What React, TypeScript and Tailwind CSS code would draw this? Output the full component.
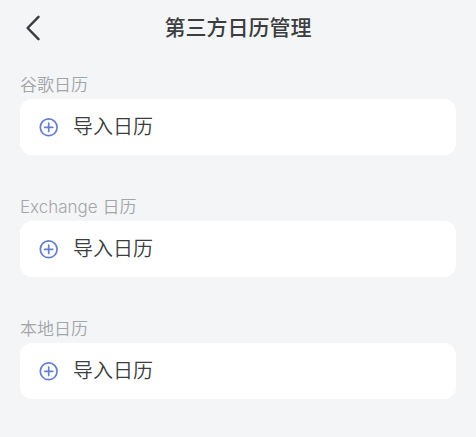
const sections = [
  { id: "google", title: "谷歌日历" },
  { id: "exchange", title: "Exchange 日历" },
  { id: "local", title: "本地日历" },
];

function BackIcon() {
  return (
    <svg width="16" height="26" viewBox="0 0 16 26" fill="none" aria-hidden="true">
      <path d="M13.5 1.8 2.6 13l10.9 11.2" stroke="#3b3d41" strokeWidth="2.5" strokeLinecap="round" strokeLinejoin="round" />
    </svg>
  );
}

function PlusCircleIcon() {
  return (
    <svg width="20" height="20" viewBox="0 0 20 20" fill="none" aria-hidden="true">
      <circle cx="9.7" cy="10.3" r="8.4" stroke="#6480cc" strokeWidth="1.7" />
      <path d="M9.7 6.2v8.2M5.6 10.3h8.2" stroke="#6480cc" strokeWidth="1.7" strokeLinecap="round" />
    </svg>
  );
}

export default function App() {
  return (
    <div className="min-h-screen bg-[#f4f5f7] font-['Inter','Noto_Sans_CJK_SC',sans-serif]">
      <header className="grid h-14 grid-cols-[1fr_auto_1fr] items-center px-[25px]">
        <button type="button" aria-label="返回" className="justify-self-start">
          <BackIcon />
        </button>
        <h1 className="text-[21px] font-medium leading-[30px] text-[#3b3d41]">第三方日历管理</h1>
      </header>
      <main className="flex flex-col gap-10 px-5 pt-[17px] pb-9">
        {sections.map((section) => (
          <section key={section.id} aria-labelledby={section.id}>
            <h2 id={section.id} className="mb-[2px] text-[17px] font-[350] leading-6 text-[#a3a5aa]">
              {section.title}
            </h2>
            <button
              type="button"
              className="flex h-14 w-full items-center gap-[14px] rounded-xl bg-white px-[19px] text-left text-xl font-[350] text-[#3b3d41]"
            >
              <PlusCircleIcon />
              导入日历
            </button>
          </section>
        ))}
      </main>
    </div>
  );
}
